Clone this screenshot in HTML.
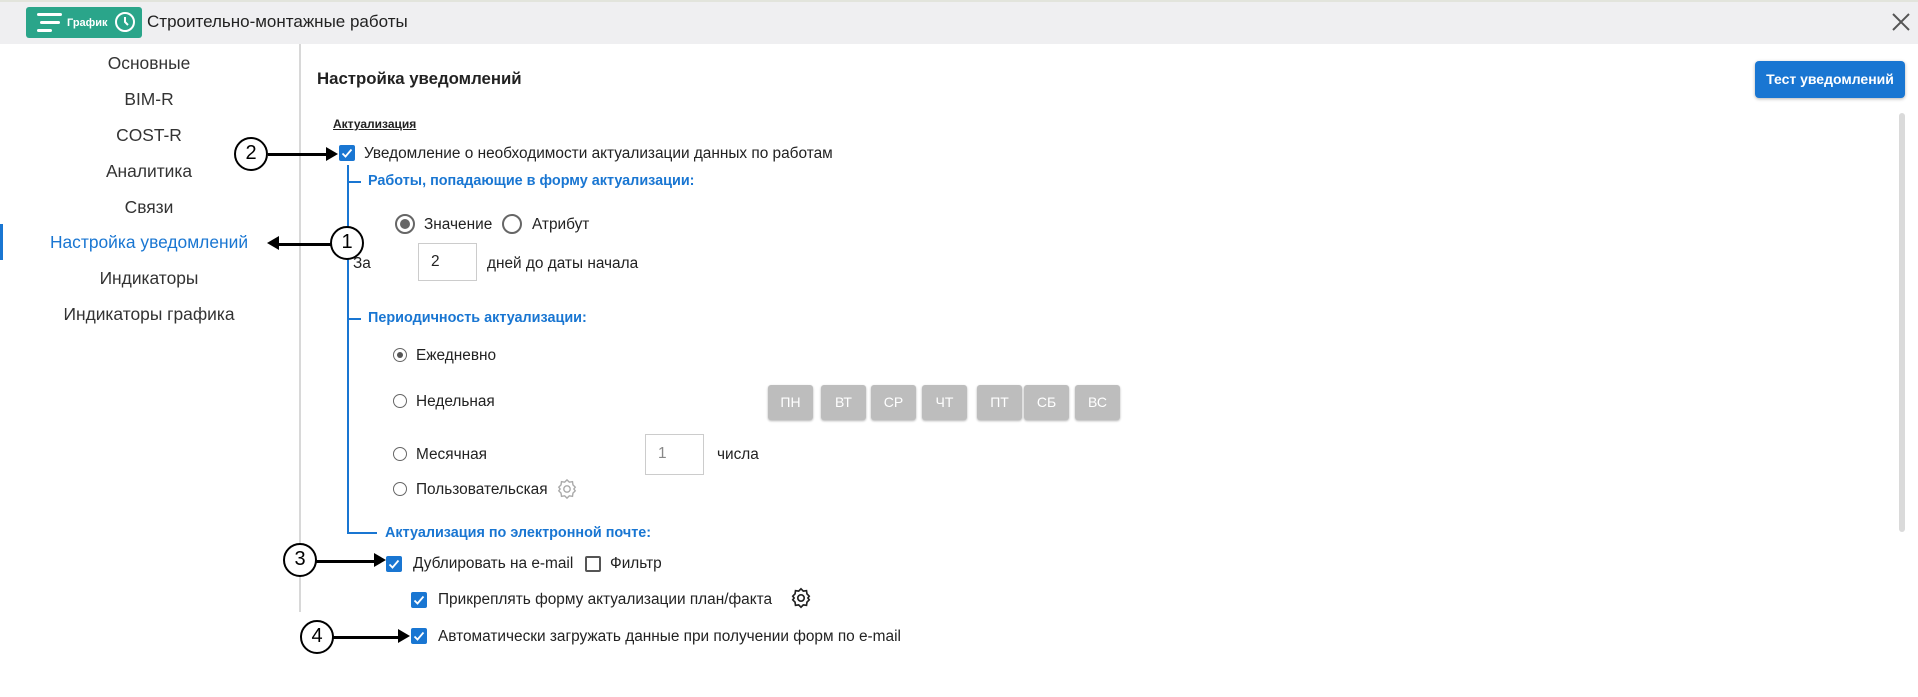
<!DOCTYPE html>
<html><head><meta charset="utf-8"><style>
*{margin:0;padding:0;box-sizing:border-box}
body{width:1918px;height:697px;position:relative;background:#fff;font-family:"Liberation Sans","Noto Sans CJK SC",sans-serif;color:#222;overflow:hidden}
.a{position:absolute;white-space:nowrap}
.hdr{left:0;top:0;width:1918px;height:44px;background:#efeff1;border-top:2px solid #e2e4dc}
.nav{font-size:17.4px;color:#333;width:298px;text-align:center;left:0}
.t{font-size:15.4px;color:#222}
.blue{color:#1976d2;font-weight:bold;font-size:14.4px}
.cb{width:16px;height:16px;border-radius:2px;background:#1976d2}
.cb svg{position:absolute;left:0;top:0}
.cbe{width:16px;height:16px;border:2px solid #555;border-radius:2px}
.rs{width:14px;height:14px;border:1.5px solid #666;border-radius:50%;background:#fff}
.day{width:45px;height:35px;background:#bdbdbd;border-radius:3px;color:#fff;font-size:14px;text-align:center;line-height:35px;box-shadow:0 1px 2px rgba(0,0,0,.3)}
.ln{background:#1976d2}
.circ{width:34px;height:34px;border:2.5px solid #000;border-radius:50%;background:#fff;font-size:20px;text-align:center;line-height:29px;color:#000}
.arr{height:2.5px;background:#000}
</style></head><body>
<div class="a hdr"></div>
<div class="a" style="left:26px;top:7px;width:116px;height:31px;background:#2aa58a;border-radius:3px"></div>
<div class="a" style="left:37px;top:13px;width:25px;height:3px;background:#fff;border-radius:2px"></div>
<div class="a" style="left:40px;top:21px;width:20px;height:3px;background:#fff;border-radius:2px"></div>
<div class="a" style="left:37px;top:29px;width:15px;height:3px;background:#fff;border-radius:2px"></div>
<div class="a" style="left:67px;top:17px;font-size:11px;color:#fff;font-weight:bold">График</div>
<svg class="a" style="left:114px;top:11px" width="22" height="22" viewBox="0 0 22 22"><circle cx="11" cy="11" r="9" fill="none" stroke="#fff" stroke-width="2"/><path d="M11 6v5l3 3" fill="none" stroke="#fff" stroke-width="2"/></svg>
<div class="a" style="left:147px;top:12px;font-size:17px;color:#222">Строительно-монтажные работы</div>
<svg class="a" style="left:1892px;top:13px" width="18" height="18"><path d="M1 1L17 17M17 1L1 17" stroke="#555" stroke-width="2"/></svg>

<div class="a nav" style="top:53px">Основные</div>
<div class="a nav" style="top:89px">BIM-R</div>
<div class="a nav" style="top:125px">COST-R</div>
<div class="a nav" style="top:161px">Аналитика</div>
<div class="a nav" style="top:197px">Связи</div>
<div class="a nav" style="top:232px;color:#1976d2">Настройка уведомлений</div>
<div class="a nav" style="top:268px">Индикаторы</div>
<div class="a nav" style="top:304px">Индикаторы графика</div>
<div class="a" style="left:0;top:224px;width:3px;height:36px;background:#1976d2"></div>
<div class="a" style="left:299px;top:44px;width:2px;height:568px;background:#d8d8d8"></div>

<div class="a" style="left:317px;top:69px;font-size:16.8px;font-weight:bold;color:#222">Настройка уведомлений</div>
<div class="a" style="left:1755px;top:61px;width:150px;height:37px;background:#1976d2;border-radius:4px;color:#fff;font-size:14px;font-weight:bold;text-align:center;line-height:37px;box-shadow:0 1px 3px rgba(0,0,0,.3)">Тест уведомлений</div>
<div class="a" style="left:1899px;top:113px;width:6px;height:419px;background:#dadada;border-radius:3px"></div>

<div class="a" style="left:333px;top:117px;font-size:12px;font-weight:bold;text-decoration:underline">Актуализация</div>
<div class="a cb" style="left:339px;top:145px"><svg width="16" height="16"><path d="M3.5 8.5l3 3 6-7" fill="none" stroke="#fff" stroke-width="1.8"/></svg></div>
<div class="a t" style="left:364px;top:145px">Уведомление о необходимости актуализации данных по работам</div>

<div class="a ln" style="left:347px;top:165px;width:2px;height:368px"></div>
<div class="a ln" style="left:347px;top:181px;width:14px;height:1.5px"></div>
<div class="a ln" style="left:347px;top:318px;width:14px;height:1.5px"></div>
<div class="a ln" style="left:347px;top:532px;width:30px;height:1.5px"></div>

<div class="a blue" style="left:368px;top:173px">Работы, попадающие в форму актуализации:</div>
<div class="a" style="left:395px;top:214px;width:20px;height:20px;border:2px solid #666;border-radius:50%"></div>
<div class="a" style="left:400px;top:219px;width:10px;height:10px;background:#666;border-radius:50%"></div>
<div class="a t" style="left:424px;top:216px">Значение</div>
<div class="a" style="left:502px;top:214px;width:20px;height:20px;border:2px solid #666;border-radius:50%"></div>
<div class="a t" style="left:532px;top:216px">Атрибут</div>
<div class="a t" style="left:353px;top:255px">За</div>
<div class="a" style="left:418px;top:243px;width:59px;height:38px;border:1px solid #ccc"></div>
<div class="a t" style="left:431px;top:253px">2</div>
<div class="a t" style="left:487px;top:255px">дней до даты начала</div>

<div class="a blue" style="left:368px;top:310px">Периодичность актуализации:</div>
<div class="a rs" style="left:393px;top:348px"></div>
<div class="a" style="left:397px;top:352px;width:6px;height:6px;background:#555;border-radius:50%"></div>
<div class="a t" style="left:416px;top:347px">Ежедневно</div>
<div class="a rs" style="left:393px;top:394px"></div>
<div class="a t" style="left:416px;top:393px">Недельная</div>
<div class="a day" style="left:768px;top:385px">ПН</div>
<div class="a day" style="left:821px;top:385px">ВТ</div>
<div class="a day" style="left:871px;top:385px">СР</div>
<div class="a day" style="left:922px;top:385px">ЧТ</div>
<div class="a day" style="left:977px;top:385px">ПТ</div>
<div class="a day" style="left:1024px;top:385px">СБ</div>
<div class="a day" style="left:1075px;top:385px">ВС</div>
<div class="a rs" style="left:393px;top:447px"></div>
<div class="a t" style="left:416px;top:446px">Месячная</div>
<div class="a" style="left:645px;top:434px;width:59px;height:41px;border:1px solid #ccc"></div>
<div class="a t" style="left:658px;top:445px;color:#888">1</div>
<div class="a t" style="left:717px;top:446px">числа</div>
<div class="a rs" style="left:393px;top:482px"></div>
<div class="a t" style="left:416px;top:481px">Пользовательская</div>
<svg class="a" style="left:556px;top:478px" width="22" height="22" viewBox="0 0 24 24"><path d="M12 2l2.5 2.5 3.5-.5.5 3.5L21 10l-1.5 2 1.5 2-2.5 2.5-.5 3.5-3.5-.5L12 22l-2.5-2.5-3.5.5-.5-3.5L3 14l1.5-2L3 10l2.5-2.5.5-3.5 3.5.5z" fill="none" stroke="#aaa" stroke-width="1.5"/><circle cx="12" cy="12" r="3.5" fill="none" stroke="#aaa" stroke-width="1.5"/></svg>

<div class="a blue" style="left:385px;top:525px">Актуализация по электронной почте:</div>
<div class="a cb" style="left:386px;top:556px"><svg width="16" height="16"><path d="M3.5 8.5l3 3 6-7" fill="none" stroke="#fff" stroke-width="1.8"/></svg></div>
<div class="a t" style="left:413px;top:555px">Дублировать на e-mail</div>
<div class="a cbe" style="left:585px;top:556px"></div>
<div class="a t" style="left:610px;top:555px">Фильтр</div>
<div class="a cb" style="left:411px;top:592px"><svg width="16" height="16"><path d="M3.5 8.5l3 3 6-7" fill="none" stroke="#fff" stroke-width="1.8"/></svg></div>
<div class="a t" style="left:438px;top:591px">Прикреплять форму актуализации план/факта</div>
<svg class="a" style="left:790px;top:587px" width="22" height="22" viewBox="0 0 24 24"><path d="M12 2l2.5 2.5 3.5-.5.5 3.5L21 10l-1.5 2 1.5 2-2.5 2.5-.5 3.5-3.5-.5L12 22l-2.5-2.5-3.5.5-.5-3.5L3 14l1.5-2L3 10l2.5-2.5.5-3.5 3.5.5z" fill="none" stroke="#222" stroke-width="1.8"/><circle cx="12" cy="12" r="3.5" fill="none" stroke="#222" stroke-width="1.8"/></svg>
<div class="a cb" style="left:411px;top:628px"><svg width="16" height="16"><path d="M3.5 8.5l3 3 6-7" fill="none" stroke="#fff" stroke-width="1.8"/></svg></div>
<div class="a t" style="left:438px;top:628px">Автоматически загружать данные при получении форм по e-mail</div>

<!-- annotations -->
<div class="a arr" style="left:268px;top:153px;width:60px"></div>
<svg class="a" style="left:326px;top:147px" width="12" height="14"><path d="M0 0L12 7L0 14z"/></svg>
<div class="a circ" style="left:234px;top:137px">2</div>

<div class="a arr" style="left:277px;top:243px;width:54px"></div>
<svg class="a" style="left:267px;top:236px" width="12" height="14"><path d="M12 0L0 7L12 14z"/></svg>
<div class="a circ" style="left:330px;top:226px">1</div>

<div class="a arr" style="left:316px;top:560px;width:60px"></div>
<svg class="a" style="left:374px;top:553px" width="12" height="14"><path d="M0 0L12 7L0 14z"/></svg>
<div class="a circ" style="left:283px;top:543px">3</div>

<div class="a arr" style="left:333px;top:636px;width:66px"></div>
<svg class="a" style="left:398px;top:629px" width="12" height="14"><path d="M0 0L12 7L0 14z"/></svg>
<div class="a circ" style="left:300px;top:620px">4</div>
</body></html>
